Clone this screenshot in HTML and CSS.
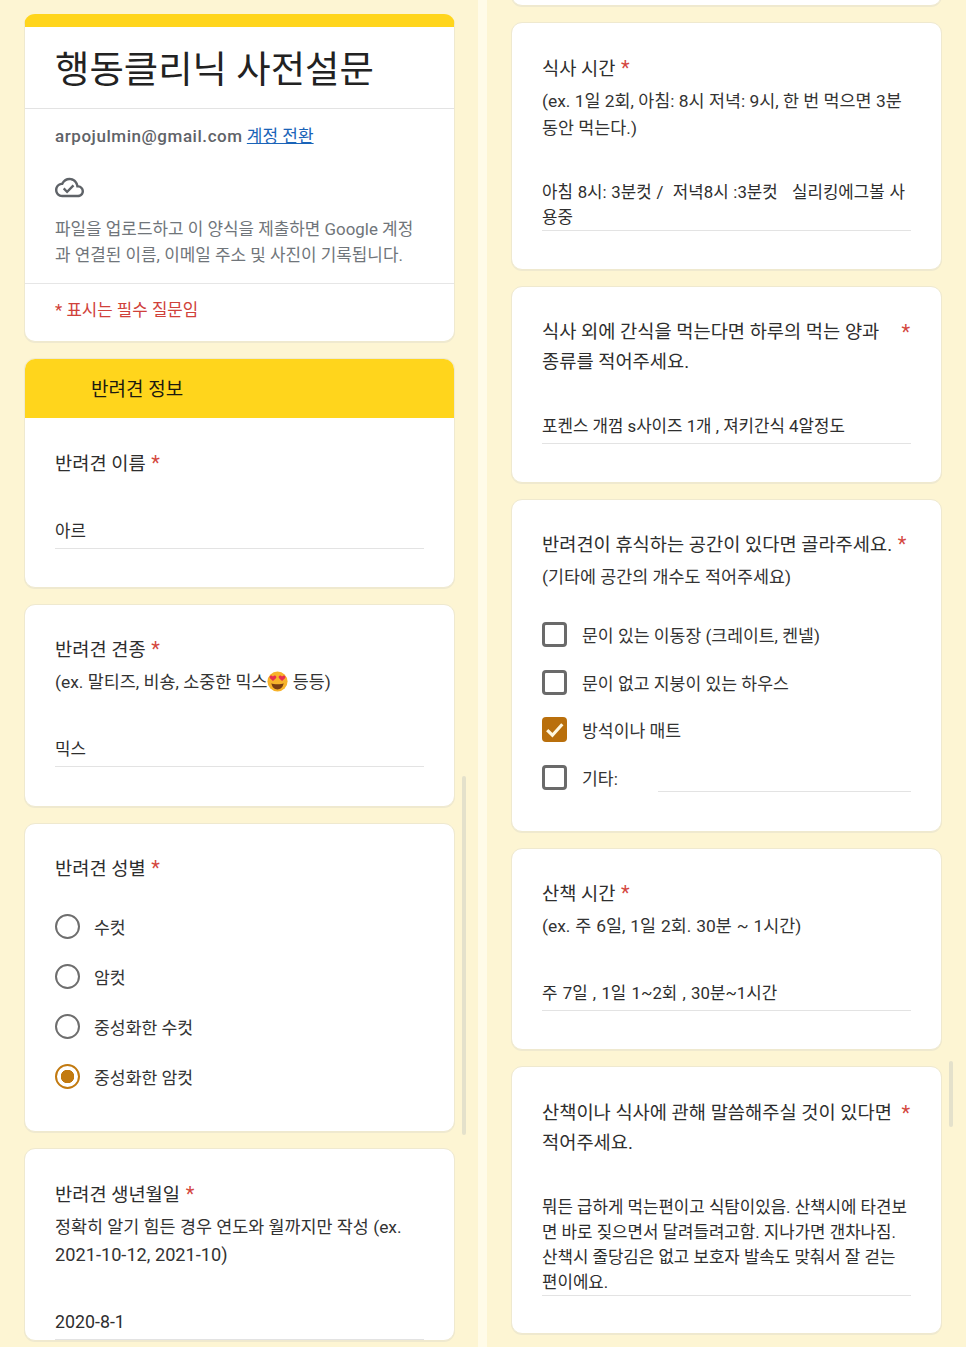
FILE: index.html
```html
<!DOCTYPE html>
<html lang="ko">
<head>
<meta charset="utf-8">
<title>행동클리닉 사전설문</title>
<link rel="stylesheet" href="styles.css">
</head>
<body>
<div class="page">
  <main class="panel panel-left">
    <section class="card card-intro">
      <h1 class="title">행동클리닉 사전설문</h1>
      <div class="intro-body">
        <div class="account"><b>arpojulmin@gmail.com</b> <a href="#">계정 전환</a></div>
        <svg class="cloud" viewBox="0 0 24 24"><path d="M19.35 10.04C18.67 6.59 15.64 4 12 4 9.11 4 6.6 5.64 5.35 8.04 2.34 8.36 0 10.91 0 14c0 3.31 2.69 6 6 6h13c2.76 0 5-2.24 5-5 0-2.64-2.05-4.78-4.65-4.96zM19 18H6c-2.21 0-4-1.79-4-4 0-2.05 1.53-3.76 3.56-3.97l1.07-.11.5-.95C8.08 7.14 9.94 6 12 6c2.62 0 4.88 1.86 5.39 4.43l.3 1.5 1.53.11c1.56.1 2.78 1.41 2.78 2.96 0 1.65-1.35 3-3 3zm-9-3.82l-2.09-2.09L6.5 13.5 10 17l6.01-6.01-1.41-1.41z"/></svg>
        <p class="notice">파일을 업로드하고 이 양식을 제출하면 Google 계정<br>과 연결된 이름, 이메일 주소 및 사진이 기록됩니다.</p>
      </div>
      <div class="required-note">* 표시는 필수 질문임</div>
    </section>

    <section class="card card-section h-230">
      <h2 class="section-head">반려견 정보</h2>
      <div class="section-body">
        <div class="q">반려견 이름 <span class="star">*</span></div>
        <div class="answer gap-40">아르</div>
      </div>
    </section>

    <section class="card pad h-203">
      <div class="q">반려견 견종 <span class="star">*</span></div>
      <div class="desc">(ex. 말티즈, 비숑, 소중한 믹스<svg class="emoji" viewBox="0 0 24 24"><circle cx="12" cy="12" r="11.5" fill="#f7b32b"/><path d="M5 14c2 1.6 12 1.6 14 0-.6 4.4-3.600 7-7 7s-6.400-2.600-7-7z" fill="#7a3d12"/><path d="M6.800 11.500 3.400 8.300C2 6.800 3.700 4.300 5.700 5.400l1.100.8 1.100-.8c2-1.100 3.700 1.400 2.300 2.900zM17.200 11.500l-3.400-3.200c-1.400-1.500.3-4 2.300-2.900l1.100.8 1.100-.8c2-1.100 3.700 1.400 2.300 2.900z" fill="#e8304f"/></svg> 등등)</div>
      <div class="answer gap-41">믹스</div>
    </section>

    <section class="card pad h-309">
      <div class="q">반려견 성별 <span class="star">*</span></div>
      <ul class="options radios">
        <li><span class="radio"></span>수컷</li>
        <li><span class="radio"></span>암컷</li>
        <li><span class="radio"></span>중성화한 수컷</li>
        <li><span class="radio on"></span>중성화한 암컷</li>
      </ul>
    </section>

    <section class="card pad pt-31">
      <div class="q">반려견 생년월일 <span class="star">*</span></div>
      <div class="desc">정확히 알기 힘든 경우 연도와 월까지만 작성 (ex.<br><span class="num-desc">2021-10-12, 2021-10)</span></div>
      <div class="answer gap-40"><span class="num-answer">2020-8-1</span></div>
    </section>
    <div class="scrollbar bar-left"></div>
  </main>

  <main class="panel panel-right">
    <section class="card card-cut"></section>

    <section class="card pad pt-31 h-248">
      <div class="q">식사 시간 <span class="star">*</span></div>
      <div class="desc">(ex. 1일 2회, 아침: 8시 저녁: 9시, 한 번 먹으면 3분<br>동안 먹는다.)</div>
      <div class="answer answer-multi ws-1 gap-38">아침 8시: 3분컷 /&nbsp; 저녁8시 :3분컷&nbsp;&nbsp; 실리킹에그볼 사<br>용중</div>
    </section>

    <section class="card pad h-197">
      <div class="q q-split"><span>식사 외에 간식을 먹는다면 하루의 먹는 양과<br>종류를 적어주세요.</span><span class="star">*</span></div>
      <div class="answer gap-37">포켄스 개껌 s사이즈 1개 , 져키간식 4알정도</div>
    </section>

    <section class="card pad h-333">
      <div class="q">반려견이 휴식하는 공간이 있다면 골라주세요. <span class="star">*</span></div>
      <div class="desc">(기타에 공간의 개수도 적어주세요)</div>
      <ul class="options checks">
        <li><span class="box"></span>문이 있는 이동장 (크레이트, 켄넬)</li>
        <li><span class="box"></span>문이 없고 지붕이 있는 하우스</li>
        <li><span class="box on"><svg viewBox="0 0 24 24"><path d="M5 12.500 10 17.500 19.500 7" fill="none" stroke="#fff8e0" stroke-width="3"/></svg></span>방석이나 매트</li>
        <li class="other"><span class="box"></span>기타:<span class="other-line"></span></li>
      </ul>
    </section>

    <section class="card pad h-202">
      <div class="q">산책 시간 <span class="star">*</span></div>
      <div class="desc ws-1">(ex. 주 6일, 1일 2회. 30분 ~ 1시간)</div>
      <div class="answer ws-2 gap-41">주 7일 , 1일 1~2회 , 30분~1시간</div>
    </section>

    <section class="card pad pt-31 h-268">
      <div class="q q-split"><span>산책이나 식사에 관해 말씀해주실 것이 있다면<br>적어주세요.</span><span class="star">*</span></div>
      <div class="answer answer-multi gap-37">뭐든 급하게 먹는편이고 식탐이있음. 산책시에 타견보<br>면 바로 짖으면서 달려들려고함. 지나가면 갠차나짐.<br>산책시 줄당김은 없고 보호자 발속도 맞춰서 잘 걷는<br>편이에요.</div>
    </section>
    <div class="scrollbar bar-right"></div>
  </main>
</div>
</body>
</html>
```

FILE: styles.css
```css
* { box-sizing: border-box; }
html, body { margin: 0; padding: 0; height: 1347px; overflow: hidden; }
body {
  font-family: Roboto, "Noto Sans CJK KR", sans-serif;
  color: #2b2b2b;
  background: #fdf5d3;
}
.page { display: flex; height: 1347px; overflow: hidden; }
.panel {
  position: relative;
  display: flex;
  flex-direction: column;
  gap: 16px;
  height: 1347px;
  overflow: hidden;
  background: #fdf5d3;
}
.panel-left { width: 478px; padding: 14px 23px 0 24px; }
.panel-right {
  width: 488px;
  padding: 0 24px 0 24px;
  border-left: 9px solid #fffbe8;
}
.card {
  flex: none;
  background: #fff;
  border: 1px solid #efe9cf;
  border-radius: 11px;
  box-shadow: 0 1px 0 #efe9cf;
  overflow: hidden;
}
.pad { padding: 30px 30px 0; }
.pt-31 { padding-top: 31px; }
.h-197 { height: 197px; }
.h-202 { height: 202px; }
.h-203 { height: 203px; }
.h-230 { height: 230px; }
.h-248 { height: 248px; }
.h-268 { height: 268px; }
.h-309 { height: 309px; }
.h-333 { height: 333px; }
.card-cut { height: 30px; margin-top: -24px; }

.card-intro { border-top: 13px solid #ffd51c; height: 328px; }
.title {
  margin: 0;
  height: 82px;
  padding: 6px 0 0 30px;
  font-size: 37.400px;
  line-height: 74px;
  font-weight: 400;
  color: #222;
  border-bottom: 1px solid #e3e3e3;
}
.intro-body { height: 175px; padding: 14px 30px 0; border-bottom: 1px solid #e6e6e6; }
.account { font-size: 17px; line-height: 26px; color: #5f6368; white-space: nowrap; }
.account b { font-weight: 500; letter-spacing: .55px; }
.account a { color: #1a64b8; }
.cloud { display: block; width: 29px; height: 29px; margin-top: 24px; fill: #5f6368; }
.notice { margin: 15px 0 0; font-size: 16.900px; line-height: 25.500px; color: #70757a; white-space: nowrap; }
.required-note { padding: 14px 30px; font-size: 16.800px; line-height: 25px; color: #d0413a; }

.section-head {
  margin: 0;
  height: 59px;
  padding: 2px 0 0 66px;
  font-size: 19px;
  line-height: 57px;
  font-weight: 400;
  color: #1c1a10;
  background: #ffd51c;
}
.section-body { padding: 31px 30px 0; }

.q { font-size: 18.700px; line-height: 30px; color: #2e2e2e; white-space: nowrap; }
.q-split { display: flex; justify-content: space-between; }
.star { margin-left: 1px; font-size: 20px; line-height: 0; color: #d4483f; }
.q-split .star { margin-right: 1px; line-height: 30px; }
.desc { margin-top: 4px; font-size: 17.400px; line-height: 27px; color: #333; white-space: nowrap; }
.num-desc { font-size: 18.200px; }
.num-answer { font-size: 17.800px; }
.ws-1 { word-spacing: .6px; }
.ws-2 { word-spacing: 1.100px; }
.emoji { width: 21px; height: 21px; vertical-align: -4px; }

.answer {
  font-size: 16.800px;
  line-height: 25px;
  color: #2e2e2e;
  white-space: nowrap;
  padding-bottom: 4px;
  border-bottom: 1px solid #e3e3e3;
}
.answer-multi { padding-bottom: 0; }
.gap-37 { margin-top: 37px; }
.gap-38 { margin-top: 38px; }
.gap-40 { margin-top: 40px; }
.gap-41 { margin-top: 41px; }

.options { list-style: none; margin: 0; padding: 0; }
.options li { display: flex; align-items: center; font-size: 17.200px; color: #333; white-space: nowrap; }
.radios { margin-top: 17px; }
.radios li { height: 50px; }
.radio {
  flex: none;
  width: 25px;
  height: 25px;
  margin-right: 14px;
  border: 2.500px solid #6e6e6e;
  border-radius: 50%;
}
.radio.on {
  border-color: #c27a10;
  background: radial-gradient(circle, #c27a10 0 6.500px, #fff 7px);
}

.checks { margin-top: 20px; }
.checks li { height: 47.500px; }
.box {
  flex: none;
  width: 25px;
  height: 25px;
  margin-right: 15px;
  border: 3px solid #6a6a6a;
  border-radius: 4px;
}
.box.on { border: 0; background: #b96f0c; }
.box svg { display: block; width: 25px; height: 25px; }
.other-line {
  flex: 1;
  align-self: flex-end;
  margin: 0 0 9px 40px;
  border-bottom: 1px solid #e3e3e3;
}

.scrollbar { position: absolute; width: 4px; background: #e4e1cb; border-radius: 2px; }
.bar-left { left: 462px; top: 776px; height: 359px; }
.bar-right { left: 462px; top: 1061px; height: 66px; }
```
